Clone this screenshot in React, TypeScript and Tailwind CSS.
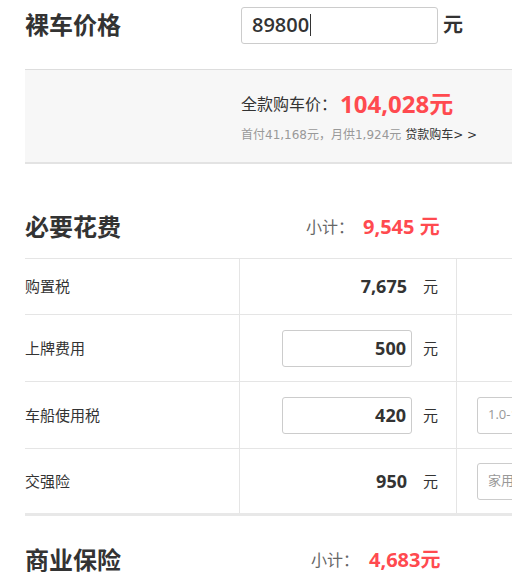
import React from "react";

const FONT = { fontFamily: '"Open Sans", "Noto Sans CJK SC", sans-serif' };
const SUB = { fontFamily: '"DejaVu Sans", "Noto Sans CJK SC", sans-serif' };

function Row({
  label,
  h,
  last,
  mid,
  right,
}: {
  label: string;
  h: string;
  last?: boolean;
  mid: React.ReactNode;
  right?: React.ReactNode;
}) {
  return (
    <div
      className={`flex ${h} ${last ? "border-b-[3px] border-[#e8e8e8]" : "border-b border-[#e5e5e5]"}`}
    >
      <div className="w-[215px] shrink-0 border-r border-[#e5e5e5] flex items-center text-[15px] text-[#333]">
        {label}
      </div>
      <div className="w-[217px] shrink-0 border-r border-[#e5e5e5] flex items-center justify-end pr-[19px]">
        {mid}
        <span className="ml-[11px] text-[15px] text-[#333] w-[14px]">元</span>
      </div>
      <div className="flex-1 flex items-center pl-[20px]">{right}</div>
    </div>
  );
}

function BoxNum({ v }: { v: string }) {
  return (
    <div className="w-[130px] h-[37px] border border-[#cccccc] rounded-[3px] flex items-center justify-end pr-[5px] text-[18px] font-bold text-[#333]">
      {v}
    </div>
  );
}

function PlainNum({ v }: { v: string }) {
  return <div className="pr-[5px] text-[18px] font-bold text-[#333]">{v}</div>;
}

function SelBox({ t }: { t: string }) {
  return (
    <div className="w-[160px] h-[37px] border border-[#cccccc] rounded-[3px] flex items-center pl-[10px] text-[13px] text-[#999] whitespace-nowrap overflow-hidden">
      {t}
    </div>
  );
}

export default function App() {
  return (
    <div className="w-[512px] h-[577px] overflow-hidden bg-white" style={FONT}>
      <div className="w-[760px] ml-[25px]">
        {/* 裸车价格 */}
        <div className="flex items-center h-[50px]">
          <div className="w-[216px] text-[24px] font-bold text-[#333] leading-none">裸车价格</div>
          <div className="w-[197px] h-[37px] border border-[#cccccc] rounded-[3px] flex items-center pl-[10px] text-[20px] font-semibold text-[#333]">
            89800
            <span className="inline-block w-px h-[22px] bg-[#333] ml-px" />
          </div>
          <span className="ml-[5px] text-[20px] font-bold text-[#333]">元</span>
        </div>

        {/* 全款 */}
        <div className="mt-[19px] h-[95px] bg-[#f7f7f7] border-t border-[#dddddd] border-b-2 border-b-[#e3e3e3] pl-[216px] pt-[18px]">
          <div className="flex items-center h-[32px]">
            <span className="text-[16px] text-[#333]">全款购车价：</span>
            <span className="ml-[3px] text-[24px] font-bold text-[#ff4a4f]">104,028元</span>
          </div>
          <div className="mt-[6px] text-[12px] text-[#999] leading-[18px] whitespace-nowrap" style={SUB}>
            首付41,168元，月供1,924元 <span className="text-[#333]">贷款购车&gt; &gt;</span>
          </div>
        </div>

        {/* 必要花费 */}
        <div className="flex items-center h-[94px] pt-[32px]">
          <div className="w-[281px] text-[24px] font-bold text-[#333]">必要花费</div>
          <span className="text-[16px] text-[#666]">小计：</span>
          <span className="ml-[9px] text-[20px] font-bold text-[#ff4a4f]">9,545 元</span>
        </div>

        <div className="border-t border-[#e5e5e5]">
          <Row label="购置税" h="h-[56px]" mid={<PlainNum v="7,675" />} />
          <Row label="上牌费用" h="h-[67px]" mid={<BoxNum v="500" />} />
          <Row label="车船使用税" h="h-[67px]" mid={<BoxNum v="420" />} right={<SelBox t="1.0-1.6L(含)" />} />
          <Row label="交强险" h="h-[67px]" last mid={<PlainNum v="950" />} right={<SelBox t="家用6座以下" />} />
        </div>

        {/* 商业保险 */}
        <div className="flex items-center h-[60px] pt-[28px]">
          <div className="w-[286px] text-[24px] font-bold text-[#333]">商业保险</div>
          <span className="text-[16px] text-[#666]">小计：</span>
          <span className="ml-[10px] text-[20px] font-bold text-[#ff4a4f]">4,683元</span>
        </div>
      </div>
    </div>
  );
}
